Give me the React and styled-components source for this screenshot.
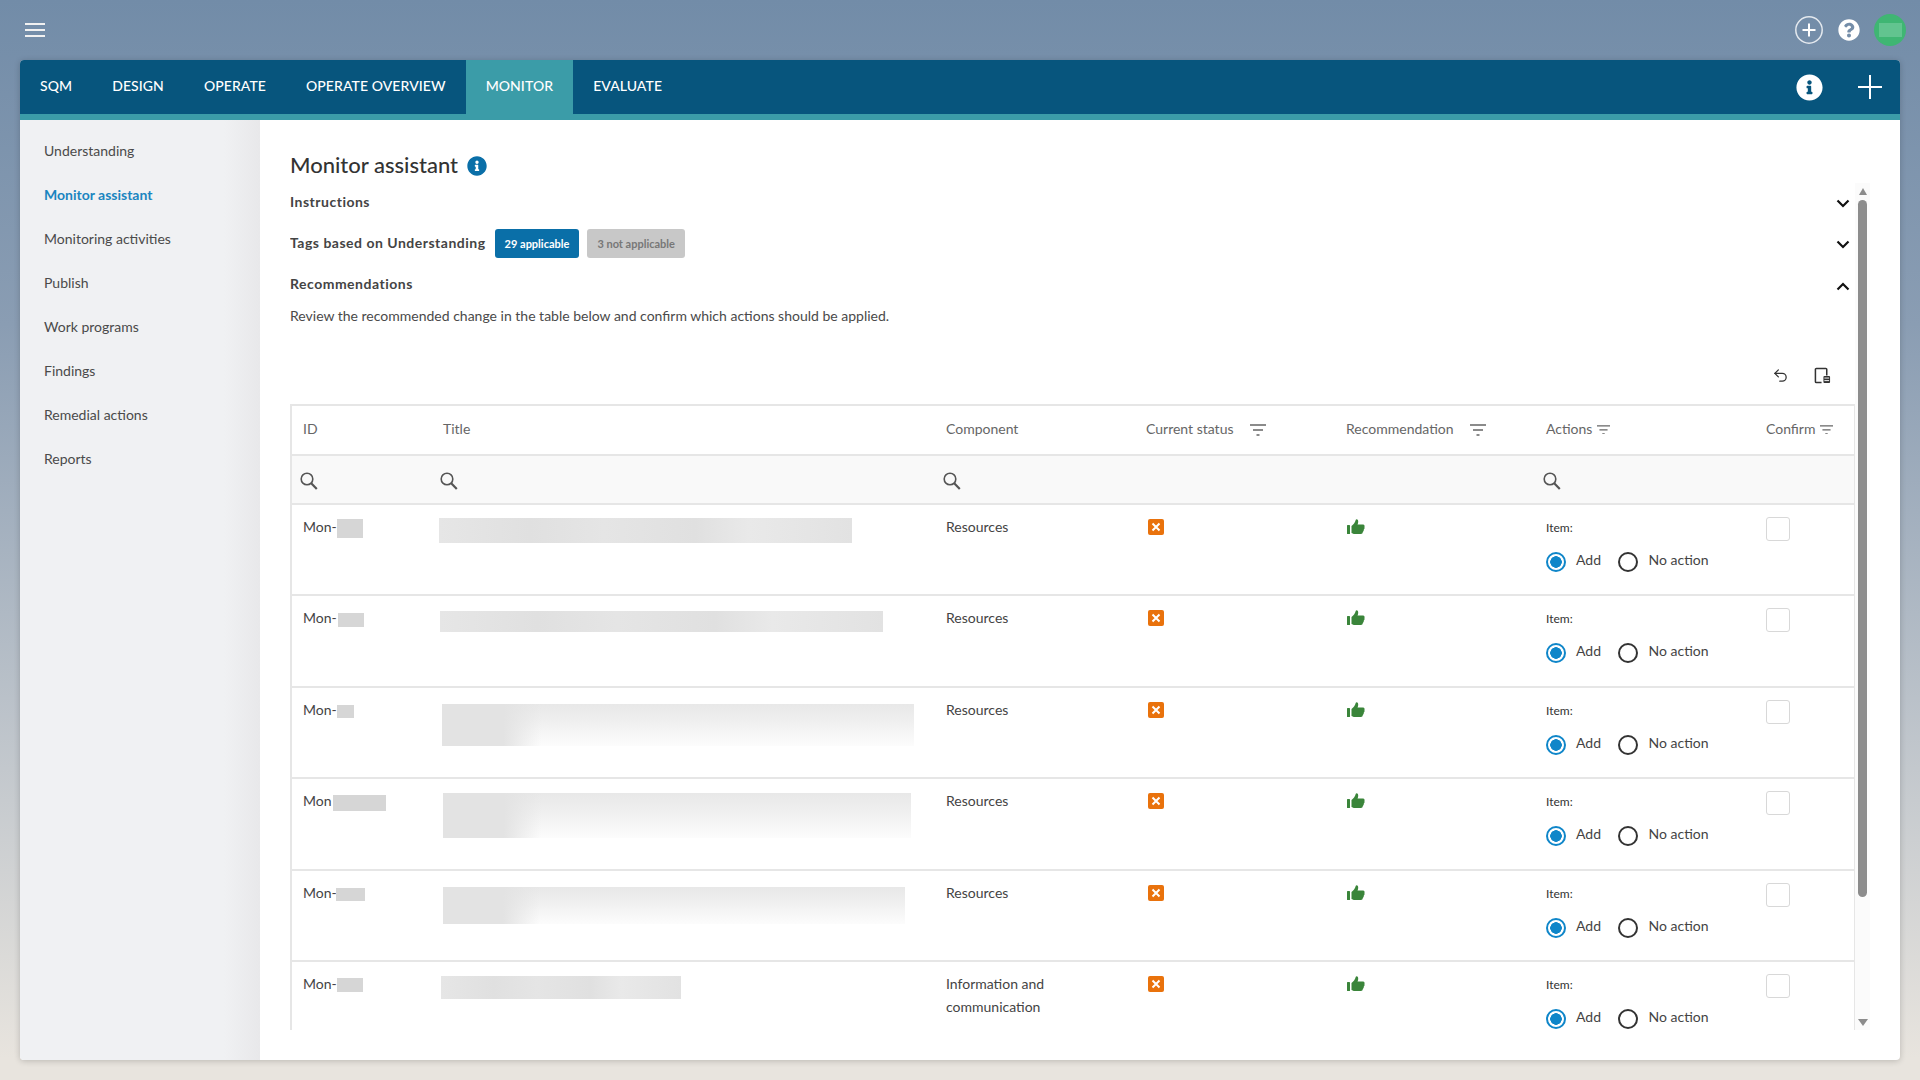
import React from 'react'
import styled, { createGlobalStyle } from 'styled-components'
import { Undo2 } from 'lucide-react'
import { FaInfoCircle, FaQuestionCircle } from 'react-icons/fa'

const sideItems = ['Understanding', 'Monitor assistant', 'Monitoring activities', 'Publish', 'Work programs', 'Findings', 'Remedial actions', 'Reports']
const tabs = ['SQM', 'DESIGN', 'OPERATE', 'OPERATE OVERVIEW', 'MONITOR', 'EVALUATE']

const rows = [
  { id: 'Mon-', idW: 26, idH: 19, idMl: 0, tW: 413, tH: 25, tMl: 9, tMt: 3, fade: false, comp: 'Resources' },
  { id: 'Mon-', idW: 26, idH: 14, idMl: 1, tW: 443, tH: 21, tMl: 10, tMt: 5, fade: false, comp: 'Resources' },
  { id: 'Mon-', idW: 17, idH: 13, idMl: 0, tW: 472, tH: 42, tMl: 12, tMt: 6, fade: true, comp: 'Resources' },
  { id: 'Mon', idW: 53, idH: 16, idMl: 1, tW: 468, tH: 45, tMl: 13, tMt: 4, fade: true, comp: 'Resources' },
  { id: 'Mon-', idW: 29, idH: 13, idMl: -1, tW: 462, tH: 37, tMl: 13, tMt: 6, fade: true, comp: 'Resources' },
  { id: 'Mon-', idW: 26, idH: 14, idMl: 0, tW: 240, tH: 23, tMl: 11, tMt: 4, fade: false, comp: 'Information and communication' },
]

function FilterIcon({ size = 16 }) {
  return (
    <svg width={size} height={size * 0.75} viewBox="0 0 16 12" fill="none" stroke="#666" strokeWidth="1.4">
      <path d="M0 1h16M3 6h10M6.5 11h3" />
    </svg>
  )
}

function SearchIcon() {
  return (
    <svg width="18" height="18" viewBox="0 0 18 18" fill="none" stroke="#555">
      <circle cx="7" cy="7" r="5.8" strokeWidth="1.6" />
      <path d="M11.2 11.2L16.8 17" strokeWidth="2.2" />
    </svg>
  )
}

function StatusIcon() {
  return (
    <svg width="16" height="16" viewBox="0 0 16 16">
      <rect width="16" height="16" rx="2" fill="#e9720c" />
      <path d="M4.5 4.5l7 7M11.5 4.5l-7 7" stroke="#fff" strokeWidth="2" fill="none" />
    </svg>
  )
}

function ThumbIcon() {
  return (
    <svg width="18" height="15" viewBox="0 0 18 15" fill="#3a853a">
      <rect x="0" y="6" width="3" height="9" rx="0.5" />
      <path d="M4.5 7C6.5 5.5 8 4 8.8 0.8C9 0 10.5 0 11 1.2C11.5 2.8 11 4.5 10.5 5.5H16C17.5 5.5 18 7 17.4 8C17.8 9 17.5 10 16.8 10.6C17 11.5 16.5 12.5 15.8 13C15.8 14.2 15 15 14 15H8C6.5 15 5.5 14.5 4.5 14Z" />
    </svg>
  )
}

function ExportIcon() {
  return (
    <svg width="17" height="17" viewBox="0 0 18 18" fill="none" stroke="#333" strokeWidth="1.6">
      <path d="M8 16.5H2.5a1 1 0 0 1-1-1V2.5a1 1 0 0 1 1-1h10a1 1 0 0 1 1 1V9" />
      <rect x="10" y="9.5" width="7" height="7.5" rx="1" fill="#333" stroke="none" />
      <path d="M11 11.7h5M11 14.4h5" stroke="#fff" strokeWidth="1" />
    </svg>
  )
}

function Chevron({ up }) {
  return (
    <ChevronBox $up={up}>
      <svg width="14" height="9" viewBox="0 0 14 9" fill="none" stroke="#111" strokeWidth="2.2">
        <path d={up ? 'M1.5 7.5L7 2l5.5 5.5' : 'M1.5 1.5L7 7l5.5-5.5'} />
      </svg>
    </ChevronBox>
  )
}

export default function App() {
  return (
    <Page>
      <GlobalStyle />
      <TopBar>
        <Burger>
          <span /><span /><span />
        </Burger>
        <TopIcons>
          <svg width="30" height="30" viewBox="0 0 30 30" fill="none" stroke="#fff">
            <circle cx="15" cy="15" r="13.2" strokeWidth="1.5" opacity="0.8" />
            <path d="M15 8.5v13M8.5 15h13" strokeWidth="2" />
          </svg>
          <FaQuestionCircle size={22} color="#fff" />
          <Avatar><AvatarMask /></Avatar>
        </TopIcons>
      </TopBar>
      <Card>
        <Nav>
          <Tabs>
            {tabs.map((t) => (
              <Tab key={t} $active={t === 'MONITOR'}>{t}</Tab>
            ))}
          </Tabs>
          <NavIcons>
            <FaInfoCircle size={27} color="#fff" />
            <svg width="24" height="24" viewBox="0 0 24 24" stroke="#fff" strokeWidth="2" fill="none">
              <path d="M12 0v24M0 12h24" />
            </svg>
          </NavIcons>
        </Nav>
        <Body>
          <Sidebar>
            {sideItems.map((s) => (
              <SideItem key={s} $active={s === 'Monitor assistant'}>{s}</SideItem>
            ))}
          </Sidebar>
          <Main>
            <TitleRow>
              <Title>Monitor assistant</Title>
              <InfoMark><FaInfoCircle size={20} color="#0a6fa8" /></InfoMark>
            </TitleRow>
            <ScrollArea>
              <ScrollContent>
                <Section $h={32}>
                  <Heading>Instructions</Heading>
                  <Chevron />
                </Section>
                <Section $h={50}>
                  <TagGroup>
                    <TagHeading>Tags based on Understanding</TagHeading>
                    <Pill $on>29 applicable</Pill>
                    <Pill>3 not applicable</Pill>
                  </TagGroup>
                  <Chevron />
                </Section>
                <Section $h={32}>
                  <Heading>Recommendations</Heading>
                  <Chevron up />
                </Section>
                <Review>Review the recommended change in the table below and confirm which actions should be applied.</Review>
                <Toolbar>
                  <Undo2 size={17} color="#333" strokeWidth={1.8} />
                  <ExportIcon />
                </Toolbar>
                <Table>
                  <HeadRow>
                    <HeadCell>ID</HeadCell>
                    <HeadCell>Title</HeadCell>
                    <HeadCell>Component</HeadCell>
                    <HeadCell>Current status<FilterGap $w={16}><FilterIcon /></FilterGap></HeadCell>
                    <HeadCell>Recommendation<FilterGap $w={16}><FilterIcon /></FilterGap></HeadCell>
                    <HeadCell>Actions<FilterGap $w={5}><FilterIcon size={13} /></FilterGap></HeadCell>
                    <HeadCell>Confirm<FilterGap $w={5}><FilterIcon size={13} /></FilterGap></HeadCell>
                  </HeadRow>
                  <SearchRow>
                    <SearchCell><SearchIcon /></SearchCell>
                    <SearchCell><SearchIcon /></SearchCell>
                    <SearchCell><SearchIcon /></SearchCell>
                    <SearchCell />
                    <SearchCell />
                    <SearchCell><SearchIcon /></SearchCell>
                    <SearchCell />
                  </SearchRow>
                  {rows.map((r, i) => (
                    <Row key={i}>
                      <Cell>
                        {r.id}
                        <IdMask $w={r.idW} $h={r.idH} $ml={r.idMl} />
                      </Cell>
                      <TitleCell>
                        <TitleMask $w={r.tW} $h={r.tH} $ml={r.tMl} $mt={r.tMt} $fade={r.fade} />
                      </TitleCell>
                      <Cell>{r.comp}</Cell>
                      <IconCell $pl={15}><StatusIcon /></IconCell>
                      <IconCell $pl={14}><ThumbIcon /></IconCell>
                      <ActionCell>
                        <ItemLabel>Item:</ItemLabel>
                        <Radios>
                          <RadioDot $on />
                          <RadioText>Add</RadioText>
                          <RadioDot />
                          <RadioText>No action</RadioText>
                        </Radios>
                      </ActionCell>
                      <ConfirmCell><CheckBox /></ConfirmCell>
                    </Row>
                  ))}
                </Table>
              </ScrollContent>
              <Rail>
                <ArrowUp />
                <Thumb $h={697} />
                <RailSpacer />
                <ArrowDown />
              </Rail>
            </ScrollArea>
          </Main>
        </Body>
      </Card>
    </Page>
  )
}

const GlobalStyle = createGlobalStyle`
  html, body {
    margin: 0;
    padding: 0;
    height: 100%;
    overflow: hidden;
  }
  body {
    font-family: Lato, "Open Sans", sans-serif;
    color: #444;
  }
`

const Page = styled.div`
  width: 1920px;
  height: 1080px;
  box-sizing: border-box;
  padding: 0 20px 20px;
  display: flex;
  flex-direction: column;
  background: linear-gradient(180deg, #728ca8 0%, #8a9db3 30%, #e8e4de 98%);
`

const TopBar = styled.div`
  height: 60px;
  flex: none;
  display: flex;
  align-items: center;
  justify-content: space-between;
`

const Burger = styled.div`
  margin-left: 5px;
  width: 20px;
  display: flex;
  flex-direction: column;
  gap: 4px;
  span {
    height: 2px;
    background: #f1f1f1;
  }
`

const TopIcons = styled.div`
  display: flex;
  align-items: center;
  margin-right: -6px;
  gap: 14px;
`

const Avatar = styled.div`
  width: 32px;
  height: 32px;
  border-radius: 50%;
  background: #3fb673;
  display: flex;
  align-items: center;
  justify-content: center;
`

const AvatarMask = styled.div`
  width: 23px;
  height: 14px;
  background: #62c48f;
`

const Card = styled.div`
  flex: 1;
  min-height: 0;
  display: flex;
  flex-direction: column;
  border-radius: 4px;
  overflow: hidden;
  background: #fff;
  box-shadow: 0 1px 6px rgba(0, 0, 0, 0.2);
`

const Nav = styled.div`
  height: 54px;
  flex: none;
  display: flex;
  justify-content: space-between;
  background: #07557d;
  border-bottom: 6px solid #3b9ca8;
`

const Tabs = styled.div`
  display: flex;
`

const Tab = styled.div`
  padding: 0 20px 3px;
  display: flex;
  align-items: center;
  font-size: 14px;
  font-weight: 500;
  letter-spacing: 0.08px;
  color: #fff;
  background: ${(p) => (p.$active ? '#3b9ca8' : 'transparent')};
`

const NavIcons = styled.div`
  display: flex;
  align-items: center;
  gap: 35px;
  padding-right: 18px;
`

const Body = styled.div`
  flex: 1;
  min-height: 0;
  display: flex;
`

const Sidebar = styled.div`
  width: 240px;
  flex: none;
  box-sizing: border-box;
  padding: 8px 0 0 24px;
  background: linear-gradient(90deg, #f0f1f3 0%, #f0f1f3 85%, #e8e8ea 100%);
`

const SideItem = styled.div`
  height: 44px;
  display: flex;
  align-items: center;
  font-size: 14px;
  font-weight: ${(p) => (p.$active ? 700 : 400)};
  color: ${(p) => (p.$active ? '#1a85c0' : '#4a4a4a')};
`

const Main = styled.div`
  flex: 1;
  min-width: 0;
  box-sizing: border-box;
  padding: 30px 30px 30px 30px;
  display: flex;
  flex-direction: column;
`

const TitleRow = styled.div`
  height: 35px;
  flex: none;
  display: flex;
  align-items: flex-start;
  gap: 9px;
`

const Title = styled.div`
  font-size: 22px;
  font-weight: 500;
  line-height: 30px;
  color: #333;
`

const InfoMark = styled.div`
  display: flex;
  margin-top: 6px;
`

const ScrollArea = styled.div`
  flex: 1;
  min-height: 0;
  display: flex;
`

const ScrollContent = styled.div`
  flex: 1;
  min-width: 0;
  overflow: hidden;
`

const Section = styled.div`
  height: ${(p) => p.$h}px;
  display: flex;
  align-items: center;
  justify-content: space-between;
  padding-right: 5px;
`

const ChevronBox = styled.span`
  display: flex;
  margin-top: ${(p) => (p.$up ? 7 : 4)}px;
`

const Heading = styled.div`
  font-size: 14px;
  font-weight: 700;
  letter-spacing: 0.5px;
  color: #444;
`

const TagHeading = styled(Heading)`
  margin-right: 1px;
`

const TagGroup = styled.div`
  display: flex;
  align-items: center;
  gap: 8px;
`

const Pill = styled.div`
  height: 29px;
  margin-top: 3px;
  padding: 0 10px;
  display: flex;
  align-items: center;
  border-radius: 3px;
  font-size: 11px;
  font-weight: 700;
  color: ${(p) => (p.$on ? '#fff' : '#777')};
  background: ${(p) => (p.$on ? '#0a6fa8' : '#c8c8c8')};
`

const Review = styled.div`
  height: 32px;
  display: flex;
  align-items: center;
  font-size: 14px;
  color: #4a4a4a;
`

const Toolbar = styled.div`
  height: 73px;
  box-sizing: border-box;
  padding: 36px 24px 0 0;
  display: flex;
  justify-content: flex-end;
  align-items: flex-start;
  gap: 25px;
`

const Table = styled.div`
  border-top: 2px solid #e6e6e6;
  border-left: 2px solid #e6e6e6;
  border-right: 1px solid #e6e6e6;
`

const gridCols = '138px 503px 200px 200px 200px 220px 1fr'

const HeadRow = styled.div`
  display: grid;
  grid-template-columns: ${gridCols};
  height: 48px;
  border-bottom: 2px solid #e6e6e6;
`

const HeadCell = styled.div`
  display: flex;
  align-items: center;
  padding: 0 0 4px 13px;
  font-size: 14px;
  color: #666;
  &:first-child {
    padding-left: 11px;
  }
`

const FilterGap = styled.span`
  display: inline-flex;
  margin-left: ${(p) => p.$w}px;
  margin-top: 3px;
`

const SearchRow = styled.div`
  display: grid;
  grid-template-columns: ${gridCols};
  height: 47px;
  background: #f9f9f9;
  border-bottom: 2px solid #e6e6e6;
`

const SearchCell = styled.div`
  display: flex;
  align-items: center;
  padding: 2px 0 0 10px;
  &:first-child {
    padding-left: 8px;
  }
`

const Row = styled.div`
  display: grid;
  grid-template-columns: ${gridCols};
  height: 89.4px;
  border-bottom: 2px solid #e6e6e6;
  font-size: 14px;
  line-height: 23px;
  color: #444;
`

const Cell = styled.div`
  padding: 10px 13px 0;
  white-space: normal;
  &:first-child {
    padding-left: 11px;
    padding-right: 0;
  }
`

const IdMask = styled.span`
  display: inline-block;
  vertical-align: middle;
  width: ${(p) => p.$w}px;
  height: ${(p) => p.$h}px;
  margin-left: ${(p) => p.$ml}px;
  background: #d6d6d6;
`

const TitleCell = styled.div`
  padding-top: 10px;
`

const TitleMask = styled.div`
  width: ${(p) => p.$w}px;
  height: ${(p) => p.$h}px;
  margin-left: ${(p) => p.$ml}px;
  margin-top: ${(p) => p.$mt}px;
  background: ${(p) =>
    p.$fade
      ? 'linear-gradient(90deg, #e3e3e3 0%, #e3e3e3 13%, rgba(227,227,227,0) 21%), linear-gradient(180deg, #e8e8e8 0%, #efefef 40%, #f8f8f8 80%, #fcfcfc 100%)'
      : 'linear-gradient(90deg, #e6e6e6 0%, #e0e0e0 22%, #e5e5e5 40%, #e0e0e0 62%, #e9e9e9 75%, #e2e2e2 100%)'};
`

const IconCell = styled.div`
  padding: 14px 0 0 ${(p) => p.$pl}px;
  svg {
    display: block;
  }
`

const ActionCell = styled.div`
  padding: 16px 0 0 13px;
`

const ItemLabel = styled.div`
  font-size: 12px;
  line-height: 14px;
  color: #333;
`

const Radios = styled.div`
  display: flex;
  align-items: center;
  margin-top: 17px;
`

const RadioDot = styled.span`
  width: 20px;
  height: 20px;
  box-sizing: border-box;
  border-radius: 50%;
  border: 2px solid ${(p) => (p.$on ? '#0f86c9' : '#333')};
  background: ${(p) => (p.$on ? 'radial-gradient(circle, #0f86c9 0, #0f86c9 5.5px, #fff 6px)' : '#fff')};
  margin-right: ${(p) => (p.$on ? 10 : 10.5)}px;
`

const RadioText = styled.span`
  font-size: 14px;
  line-height: 20px;
  margin-top: -4px;
  margin-right: 17px;
  color: #444;
`

const ConfirmCell = styled.div`
  padding: 12px 0 0 13px;
`

const CheckBox = styled.div`
  width: 24px;
  height: 24px;
  box-sizing: border-box;
  border: 1px solid #d8d8d8;
  border-radius: 3px;
  background: #fff;
`

const Rail = styled.div`
  width: 15px;
  flex: none;
  box-sizing: border-box;
  margin-top: -2px;
  padding: 5px 0 4px;
  display: flex;
  flex-direction: column;
  align-items: center;
  background: #fbfbfb;
`

const ArrowUp = styled.div`
  width: 0;
  height: 0;
  border-left: 4.5px solid transparent;
  border-right: 4.5px solid transparent;
  border-bottom: 7px solid #8c8c8c;
`

const ArrowDown = styled.div`
  width: 0;
  height: 0;
  border-left: 5px solid transparent;
  border-right: 5px solid transparent;
  border-top: 7px solid #8c8c8c;
`

const Thumb = styled.div`
  width: 9px;
  height: ${(p) => p.$h}px;
  margin-top: 5px;
  border-radius: 5px;
  background: #8c8c8c;
`

const RailSpacer = styled.div`
  flex: 1;
`
